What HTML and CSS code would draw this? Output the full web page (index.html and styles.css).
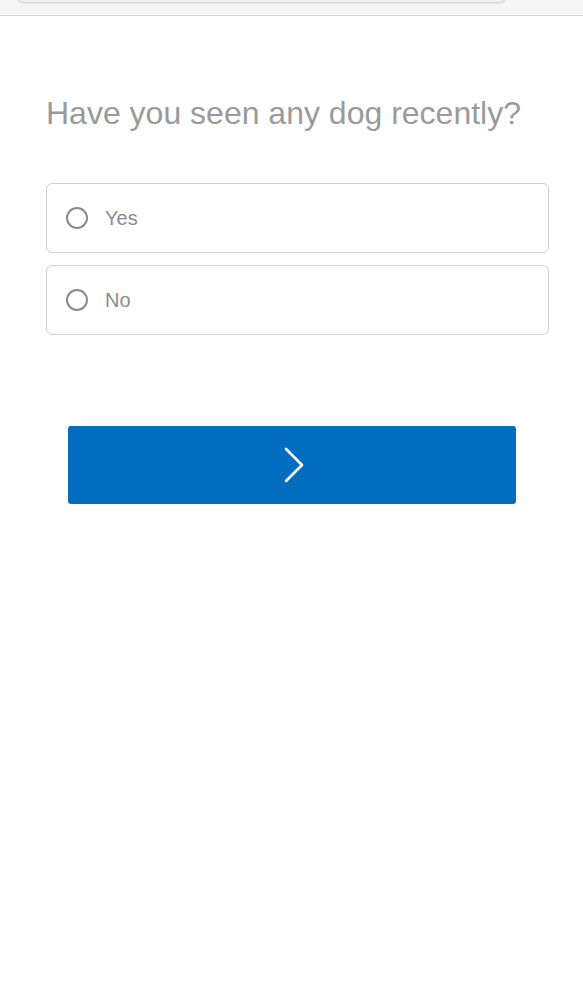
FILE: index.html
```html
<!DOCTYPE html>
<html>
<head>
<meta charset="utf-8">
<link rel="stylesheet" href="styles.css">
</head>
<body>
<div class="topbar"><div class="urlfield"></div></div>
<main class="page">
  <h1 class="question">Have you seen any dog recently?</h1>
  <div class="options">
    <label class="option"><span class="radio"></span><span class="label">Yes</span></label>
    <label class="option"><span class="radio"></span><span class="label">No</span></label>
  </div>
  <div class="actions">
    <button class="next" type="button" aria-label="Next">
      <svg width="22" height="36" viewBox="0 0 22 36"><path d="M3 2 L19 18 L3 34" fill="none" stroke="#fff" stroke-width="2.6" stroke-linecap="round" stroke-linejoin="round"/></svg>
    </button>
  </div>
</main>
</body>
</html>
```
FILE: styles.css
```css
html, body { margin: 0; padding: 0; background: #fff; }
body { font-family: "Liberation Sans", Arial, sans-serif; }
.topbar {
  height: 15px;
  background: #f5f5f5;
  border-bottom: 1px solid #d4d4d4;
  position: relative;
  overflow: hidden;
}
.urlfield {
  margin: -20px 0 0 16px;
  width: 491px;
  height: 22px;
  background: #f2f2f2;
  border-radius: 8px;
  box-shadow: 0 1px 2px rgba(0,0,0,0.18);
}
.page { padding: 0 34px 0 46px; }
.question {
  margin: 77px 0 0 0;
  font-weight: normal;
  font-size: 32px;
  line-height: 40px;
  color: #9a9a9a;
  letter-spacing: 0;
}
.options {
  margin-top: 50px;
  display: flex;
  flex-direction: column;
  gap: 12px;
  width: 503px;
}
.option {
  box-sizing: border-box;
  height: 70px;
  border: 1.5px solid #cfcfcf;
  border-radius: 6px;
  display: flex;
  align-items: center;
  padding-left: 19px;
}
.radio {
  box-sizing: border-box;
  width: 22px;
  height: 22px;
  border: 2px solid #8a8a8a;
  border-radius: 50%;
}
.label {
  margin-left: 17px;
  font-size: 20px;
  color: #8c8c8c;
}
.actions { margin-top: 91px; padding-left: 22px; }
.next {
  width: 448px;
  height: 78px;
  border: none;
  border-radius: 3px;
  background: #006dbf;
  display: flex;
  align-items: center;
  justify-content: center;
  padding: 0 0 0 3px;
  cursor: pointer;
}
```
